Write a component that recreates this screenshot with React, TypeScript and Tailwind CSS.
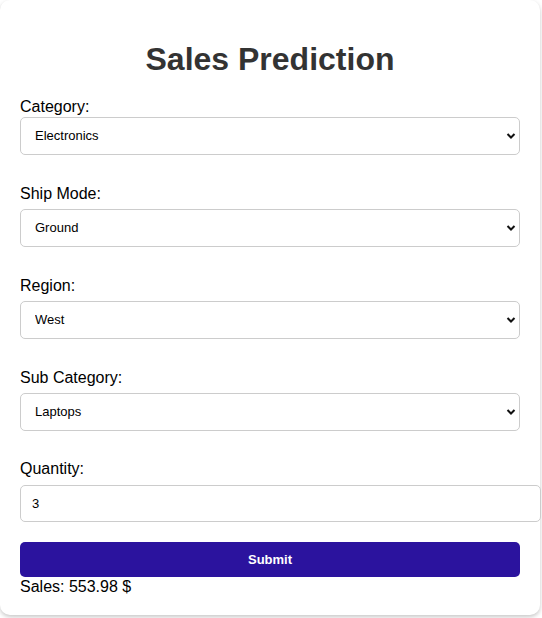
import { useState } from "react"

function Chevron() {
  return (
    <svg
      className="pointer-events-none absolute right-[4px] top-1/2 -translate-y-1/2"
      width="10"
      height="7"
      viewBox="0 0 10 7"
    >
      <polyline points="1.5,1.5 5,5 8.5,1.5" fill="none" stroke="#111" strokeWidth="2" />
    </svg>
  )
}

function SelectField({
  label,
  value,
  options,
  gap,
}: {
  label: string
  value: string
  options: string[]
  gap: string
}) {
  const [v, setV] = useState(value)
  return (
    <div className="flex flex-col">
      <label className="text-[16px] leading-[20px] text-black">{label}</label>
      <div className={`relative w-[500px] ${gap}`}>
        <select
          value={v}
          onChange={(e) => setV(e.target.value)}
          className="h-[38px] w-full appearance-none rounded-[5px] border border-[#ccc] bg-white pl-[14px] text-[13px] text-black outline-none"
        >
          {options.map((o) => (
            <option key={o}>{o}</option>
          ))}
        </select>
        <Chevron />
      </div>
    </div>
  )
}

export default function App() {
  const [qty, setQty] = useState("3")
  return (
    <div className="min-h-screen bg-white font-['Liberation_Sans',Arial,sans-serif]">
      <div className="w-[540px] rounded-[10px] bg-white px-[20px] pb-[18px] pt-[19px] shadow-[0_2px_4px_rgba(0,0,0,0.22)]">
        <h1 className="mb-[18px] mt-[21px] text-center text-[32px] font-bold leading-[39px] text-[#333]">
          Sales Prediction
        </h1>

        <div className="flex flex-col gap-[29px]">
          <SelectField
            label="Category:"
            value="Electronics"
            options={["Electronics", "Furniture", "Office Supplies"]}
            gap="mt-0"
          />
          <SelectField
            label="Ship Mode:"
            value="Ground"
            options={["Ground", "Air", "Express"]}
            gap="mt-[5px]"
          />
          <SelectField
            label="Region:"
            value="West"
            options={["West", "East", "North", "South"]}
            gap="mt-[5px]"
          />
          <SelectField
            label="Sub Category:"
            value="Laptops"
            options={["Laptops", "Phones", "Accessories"]}
            gap="mt-[5px]"
          />
          <div className="-mt-[1px] flex flex-col">
            <label className="text-[16px] leading-[20px] text-black">Quantity:</label>
            <input
              type="number"
              value={qty}
              onChange={(e) => setQty(e.target.value)}
              className="mt-[6px] h-[37px] w-[521px] rounded-[5px] border border-[#ccc] bg-white pl-[11px] text-[13px] text-black outline-none [appearance:textfield]"
            />
          </div>
        </div>

        <button className="mt-[20px] h-[35px] w-[500px] rounded-[5px] bg-[#2b139e] text-[13px] font-bold text-white">
          Submit
        </button>
        <p className="text-[16px] leading-[20px] text-black">Sales: 553.98 $</p>
      </div>
    </div>
  )
}
